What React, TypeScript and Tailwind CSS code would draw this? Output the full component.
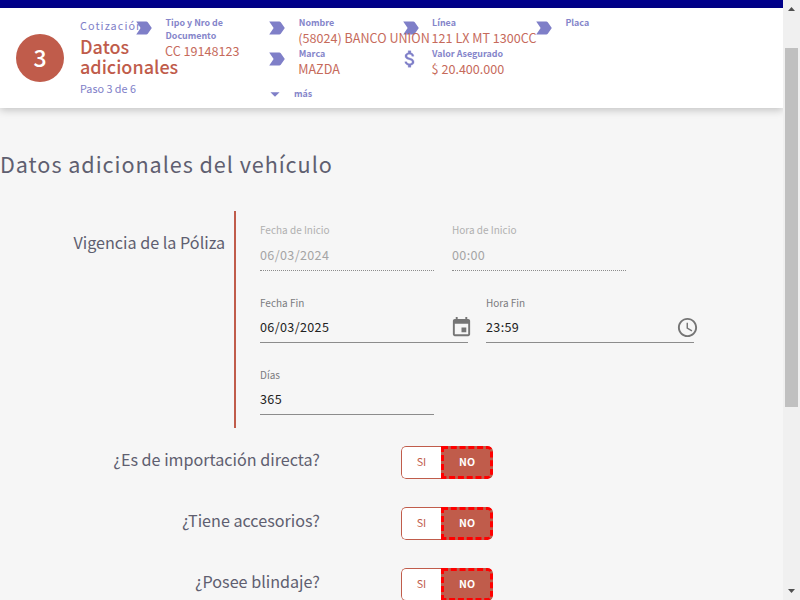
import type { ReactNode } from "react";

const ARROW =
  "M3.5 18.99l11 .01c.67 0 1.27-.33 1.63-.84L20.5 12l-4.37-6.16c-.36-.51-.96-.84-1.63-.84l-11 .01L8.34 12 3.5 18.99z";
const MONEY =
  "M11.8 10.9c-2.27-.59-3-1.2-3-2.15 0-1.09 1.01-1.85 2.7-1.85 1.78 0 2.44.85 2.5 2.1h2.21c-.07-1.72-1.12-3.3-3.21-3.81V3h-3v2.16c-1.94.42-3.5 1.68-3.5 3.61 0 2.31 1.91 3.46 4.7 4.13 2.5.6 3 1.48 3 2.41 0 .69-.49 1.79-2.7 1.79-2.06 0-2.87-.92-2.98-2.1h-2.2c.12 2.19 1.76 3.42 3.68 3.83V21h3v-2.15c1.95-.37 3.5-1.5 3.5-3.55 0-2.84-2.43-3.81-4.7-4.4z";
const EVENT =
  "M17 12h-5v5h5v-5zM16 1v2H8V1H6v2H5c-1.11 0-1.99.9-1.99 2L3 19c0 1.1.89 2 2 2h14c1.1 0 2-.9 2-2V5c0-1.1-.9-2-2-2h-1V1h-2zm3 18H5V8h14v11z";
const CLOCK =
  "M11.99 2C6.47 2 2 6.48 2 12s4.47 10 9.99 10C17.52 22 22 17.52 22 12S17.52 2 11.99 2zM12 20c-4.42 0-8-3.58-8-8s3.58-8 8-8 8 3.58 8 8-3.58 8-8 8zm.5-13H11v6l5.25 3.15.75-1.23-4.5-2.67z";

function Icon({ d, className }: { d: string; className: string }) {
  return (
    <svg viewBox="0 0 24 24" fill="currentColor" className={"shrink-0 " + className}>
      <path d={d} />
    </svg>
  );
}

function Summary({ label, value, money }: { label: ReactNode; value?: string; money?: boolean }) {
  return (
    <div className="flex w-[133.3px] items-start">
      <Icon
        d={money ? MONEY : ARROW}
        className={money ? "-ml-px mr-px size-[22px] stroke-current stroke-[0.3] text-[#7f7fc8]" : "size-[22px] text-[#7f7fc8]"}
      />
      <div className="relative z-10 -mt-px ml-[10px] pb-px whitespace-nowrap">
        <div className="pl-[0.5px] text-[8.9px] leading-[13px] font-bold text-[#8585ca]">{label}</div>
        {value && <div className="text-[12.6px] leading-[18px] text-[#c66a5b]">{value}</div>}
      </div>
    </div>
  );
}

function Field({ label, value, disabled, wide, icon }: { label: string; value: string; disabled?: boolean; wide?: boolean; icon?: string }) {
  return (
    <div className={wide ? "w-[208px]" : "w-[174px]"}>
      <div className={"h-4 text-[10px] " + (disabled ? "leading-4 text-[#b0b0b0]" : "leading-[18px] text-[#7b7b80]")}>{label}</div>
      <div className="flex h-[32px] justify-between">
        <div className={"text-[12.6px] leading-[34px] tracking-[0.35px] " + (disabled ? "text-[#a5a5a5]" : "text-[#222]")}>{value}</div>
        {icon && <Icon d={icon} className="mt-[6px] -mr-[4.5px] size-[23px] text-[#757575]" />}
      </div>
      <div className={"border-t border-[#8c8c8c] " + (disabled ? "border-dotted" : "")} />
    </div>
  );
}

function Question({ text }: { text: string }) {
  return (
    <div className="flex h-[61px] items-start">
      <div className="w-[320px] text-right text-[16.15px] leading-[26px] text-[#5f5f70]">{text}</div>
      <div className="ml-[81px] flex h-[33px] w-[92px] overflow-hidden rounded-[5px] text-[10.8px]">
        <button className="w-10 rounded-l-[5px] border border-r-0 border-[#c05c4b] bg-white pb-[2px] text-[#c05c4b]">SI</button>
        <button className="flex-1 rounded-r-[5px] border-[3px] border-dashed border-[#ff0000] bg-[#c05c4b] pb-[2px] text-[10.5px] font-bold text-white">NO</button>
      </div>
    </div>
  );
}

export default function App() {
  return (
    <div className="flex h-[600px] w-[800px] overflow-hidden bg-[#f6f6f6] font-['Noto_Sans_CJK_SC',sans-serif]">
      <main className="w-[783px] overflow-hidden">
        <div className="h-2 bg-[#00008b]" />
        <header className="flex h-[100px] bg-white shadow-[0_2px_8px_rgba(0,0,0,0.22)]">
          <div className="mt-[26px] ml-4 flex size-12 shrink-0 items-center justify-center rounded-full bg-[#c05c4b] pb-px text-[23px] font-medium text-white">3</div>
          <div className="ml-4 w-[53px] pt-[7px]">
            <div className="text-[10.8px] leading-5 tracking-[1.1px] text-[#8080c8]">Cotización</div>
            <div className="mt-px text-[18px] leading-5 font-medium text-[#c05c4b]">
              Datos
              <br />
              adicionales
            </div>
            <div className="mt-[4px] text-[10.8px] leading-4 whitespace-nowrap text-[#8080c8]">Paso 3 de 6</div>
          </div>
          <div className="flex flex-col pt-[9px]">
            <div className="flex">
              <Summary label={<>Tipo y Nro de<br />Documento</>} value="CC 19148123" />
              <div className="flex flex-col">
                <Summary label="Nombre" value="(58024) BANCO UNION" />
                <Summary label="Marca" value="MAZDA" />
              </div>
              <div className="flex flex-col">
                <Summary label="Línea" value="121 LX MT 1300CC" />
                <Summary label="Valor Asegurado" value="$ 20.400.000" money />
              </div>
              <Summary label="Placa" />
            </div>
            <div className="mt-[5px] ml-[131px] flex h-5 items-center">
              <Icon d="M7 10l5 5 5-5z" className="size-[22px] text-[#7f7fc8]" />
              <span className="ml-[8px] text-[8.9px] font-bold text-[#8585ca]">más</span>
            </div>
          </div>
        </header>
        <h1 className="mt-[40px] text-[21.6px] leading-8 tracking-[0.95px] text-[#5f5f70]">Datos adicionales del vehículo</h1>
        <section className="mt-[31px] flex h-[217px]">
          <div className="w-[225px] pt-[17px] text-right text-[16.15px] leading-[28px] text-[#5f5f70]">Vigencia de la Póliza</div>
          <div className="ml-[9px] flex flex-col gap-[23px] border-l-2 border-[#c05c4b] pt-[11px] pl-6">
            <div className="flex gap-[18px]">
              <Field label="Fecha de Inicio" value="06/03/2024" disabled />
              <Field label="Hora de Inicio" value="00:00" disabled />
            </div>
            <div className="flex gap-[18px]">
              <Field label="Fecha Fin" value="06/03/2025" wide icon={EVENT} />
              <Field label="Hora Fin" value="23:59" wide icon={CLOCK} />
            </div>
            <Field label="Días" value="365" />
          </div>
        </section>
        <section className="mt-[18px]">
          <Question text="¿Es de importación directa?" />
          <Question text="¿Tiene accesorios?" />
          <Question text="¿Posee blindaje?" />
        </section>
      </main>
      <aside className="flex w-[17px] flex-col items-center bg-[#f0f0f0]">
        <svg viewBox="0 0 17 48" className="h-12 w-[17px]" fill="#505050"><path d="M5 11L8.5 7L12 11Z" /></svg>
        <div className="h-[359px] w-[13px] bg-[#c0c0c0]" />
        <svg viewBox="0 0 17 17" className="mt-auto h-[17px] w-[17px]" fill="#505050"><path d="M5 6H12L8.5 10Z" /></svg>
      </aside>
    </div>
  );
}
